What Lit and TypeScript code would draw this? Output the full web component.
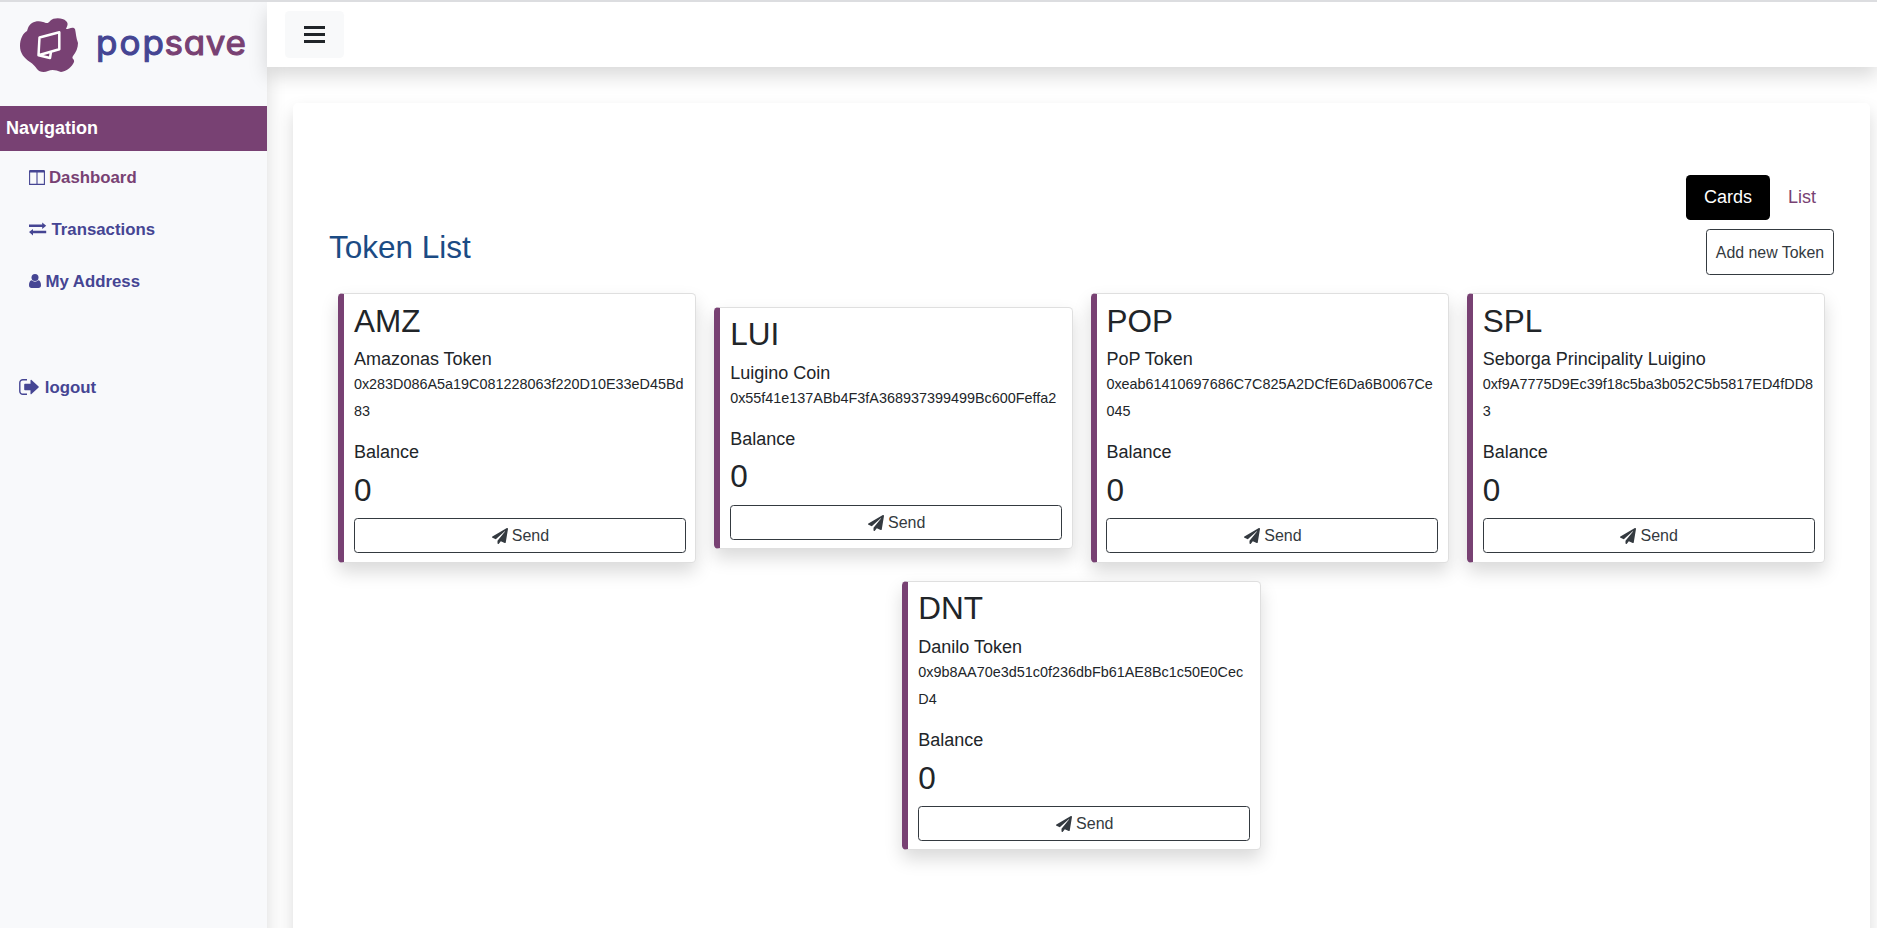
import { LitElement, html, css, svg } from "lit";
import { customElement, property } from "lit/decorators.js";

interface Token {
  symbol: string;
  name: string;
  address: string;
  balance: string;
}

const TOKENS: Token[] = [
  { symbol: "AMZ", name: "Amazonas Token", address: "0x283D086A5a19C081228063f220D10E33eD45Bd83", balance: "0" },
  { symbol: "LUI", name: "Luigino Coin", address: "0x55f41e137ABb4F3fA368937399499Bc600Feffa2", balance: "0" },
  { symbol: "POP", name: "PoP Token", address: "0xeab61410697686C7C825A2DCfE6Da6B0067Ce045", balance: "0" },
  { symbol: "SPL", name: "Seborga Principality Luigino", address: "0xf9A7775D9Ec39f18c5ba3b052C5b5817ED4fDD83", balance: "0" },
  { symbol: "DNT", name: "Danilo Token", address: "0x9b8AA70e3d51c0f236dbFb61AE8Bc1c50E0CecD4", balance: "0" },
];

@customElement("token-card")
export class TokenCard extends LitElement {
  @property({ attribute: false }) token!: Token;

  static styles = css`
    :host {
      display: block;
      box-sizing: border-box;
      width: 358.25px;
      background: #fff;
      border: 1px solid #dfdfdf;
      border-left: 6px solid #784173;
      border-radius: 4.5px;
      box-shadow: 0 9px 18px rgba(0, 0, 0, 0.15);
      padding: 7.6px 9.3px 8.6px 9.9px;
      color: #212529;
      font-size: 18px;
      line-height: 27px;
    }
    .symbol, .balance { font-size: 31.5px; line-height: 38.4px; }
    .name { margin-top: 6.3px; }
    .address { font-size: 14.4px; word-break: break-all; margin-top: -2px; }
    .label { margin-top: 14px; }
    .balance { margin-top: 4.5px; }
    .send {
      display: flex;
      align-items: center;
      justify-content: center;
      gap: 4px;
      box-sizing: border-box;
      width: 100%;
      height: 34.8px;
      margin-top: 9px;
      padding: 1px 0 0 1px;
      border: 1px solid #343a40;
      border-radius: 3.6px;
      background: transparent;
      color: #343a40;
      font: 16px/24px "Liberation Sans", Arial, sans-serif;
    }
    .plane { width: 16px; height: 16px; fill: currentColor; }
  `;

  render() {
    const t = this.token;
    return html`
      <div class="symbol">${t.symbol}</div>
      <div class="name">${t.name}</div>
      <div class="address">${t.address}</div>
      <div class="label">Balance</div>
      <div class="balance">${t.balance}</div>
      <button class="send">
        <svg class="plane" viewBox="0 0 512 512"><path d="M476 3.2L12.5 270.6c-18.1 10.4-15.8 35.6 2.2 43.2L121 358.4l287.3-253.2c5.500-4.900 13.300 2.600 8.600 8.300L176 407v80.500c0 23.600 28.500 32.900 42.500 15.800L282 426l124.600 52.200c14.200 6 30.400-2.900 33-18.200l72-432C515 7.800 493.300-6.800 476 3.200z"/></svg>
        <span>Send</span>
      </button>
    `;
  }
}

const columnsIcon = svg`<path d="M.6 1.500h14.800v12.900H.6z M8 2v12" fill="none" stroke="currentColor" stroke-width="1.100"/><path d="M0 1.200Q0 0 1.200 0h13.600Q16 0 16 1.200V2.500H0z" fill="currentColor"/>`;
const exchangeIcon = svg`<path d="M0 2.500h13.200V.6L17.200 3.800 13.200 7V5H0zM17.200 8.700v2.500H4V13.400L0 10.100 4 6.900V8.700z" fill="currentColor"/>`;
const userIcon = svg`<circle cx="6" cy="3.600" r="3.500" fill="currentColor"/><path d="M2.600 6.300C.8 6.600 0 8.700 0 11.300 0 13 1 14 2.500 14h7c1.500 0 2.500-1 2.500-2.700 0-2.600-.8-4.700-2.600-5-1.900 1.900-4.900 1.900-6.800 0z" fill="currentColor"/>`;
const logoutIcon = svg`<path d="M8 .8H4A3 3 0 0 0 .8 3.800v8.400A3 3 0 0 0 4 15.200h4" fill="none" stroke="currentColor" stroke-width="1.400"/><path d="M6 4.700h5.500V1.300c0-.5.6-.8 1-.4l7.100 6.500c.3.300.3.900 0 1.200l-7.100 6.500c-.4.400-1 .1-1-.4v-3.400H6c-.5 0-.8-.3-.8-.8v-5c0-.5.3-.8.8-.8z" fill="currentColor"/>`;

@customElement("app-root")
export class AppRoot extends LitElement {
  static styles = css`
    :host {
      display: grid;
      grid-template-columns: 267px 1fr;
      box-sizing: border-box;
      height: 928px;
      overflow: hidden;
      border-top: 2px solid #dcdde0;
      background: #fff;
      font-family: "Liberation Sans", Arial, sans-serif;
      font-size: 18px;
      line-height: 27px;
      color: #212529;
    }
    .sidebar {
      background: #f8f9fb;
      box-shadow: 0 9px 18px rgba(0, 0, 0, 0.15);
      color: #454593;
      font-weight: bold;
    }
    .brand { display: block; width: 267px; height: 104px; }
    .wordmark {
      font-family: Inter, "Open Sans", sans-serif;
      font-size: 35px;
      font-weight: 400;
      font-feature-settings: "cv11";
      stroke-width: 1.1px;
      stroke-linejoin: round;
    }
    .heading {
      height: 45px;
      box-sizing: border-box;
      padding: 9px 6px;
      background: #784173;
      color: #fff;
    }
    .items { display: flex; flex-direction: column; font-size: 16.8px; padding-left: 29px; }
    .item { display: flex; align-items: center; height: 52px; gap: 4.5px; }
    .item.active { color: #784173; gap: 4px; }
    .item.active svg { color: #454593; }
    .logout { display: flex; align-items: center; gap: 5.5px; height: 52px; margin-top: 54px; padding-left: 19.3px; font-size: 16.8px; }
    .page { display: flex; flex-direction: column; min-width: 0; }
    .topbar {
      flex: none;
      height: 65px;
      box-sizing: border-box;
      padding: 9px 18px;
      background: #fff;
      box-shadow: 0 9px 18px rgba(0, 0, 0, 0.15);
    }
    .menu {
      display: flex;
      align-items: center;
      justify-content: center;
      width: 59px;
      height: 47px;
      padding: 0;
      border: 0;
      border-radius: 4.5px;
      background: #f8f9fa;
      color: #212529;
    }
    .panel {
      flex: 1 0 900px;
      box-sizing: border-box;
      margin: 36px 7px 0 26px;
      padding: 72px 36px 0;
      background: #fff;
      border-radius: 5px;
      box-shadow: 0 9px 18px rgba(0, 0, 0, 0.15);
    }
    .tabs { display: flex; justify-content: flex-end; }
    .tab { padding: 9px 18px; border-radius: 4.5px; color: #784173; }
    .tab.active { background: #000; color: #fff; }
    .title-row { display: flex; justify-content: space-between; align-items: flex-start; padding-top: 9px; height: 55.2px; }
    .title { margin: -1px 0 0; font-size: 31.5px; line-height: 38.4px; font-weight: 400; color: #1b4b84; }
    .add {
      box-sizing: border-box;
      width: 128px;
      height: 46px;
      padding: 1px 0 0;
      border: 1px solid #343a40;
      border-radius: 3.6px;
      background: transparent;
      color: #343a40;
      font: 15.9px/24px "Liberation Sans", Arial, sans-serif;
    }
    .cards { display: flex; flex-wrap: wrap; align-items: center; justify-content: center; }
    token-card { margin: 9px; }
  `;

  render() {
    return html`
      <nav class="sidebar">
        <svg class="brand" viewBox="0 2 267 104">
          <path fill="#784173" d="M28 28C30 23 36 20 43 22C46 23 48 24 50 21C54 17 63 18 66 21C69 24 67 26 66 29C69 29 73 26 75 29C76 33 76 38 78 43C78 48 76 52 73 56C71 59 75 59 74 62C72 67 67 71 61 72C56 70 52 69 48 71C44 73 39 72 37 69C35 66 33 64 30 62C24 58 20 53 20 46C20 39 23 33 27 31Z"/>
          <path fill="none" stroke="#fff" stroke-width="2.500" stroke-linejoin="round" d="M39.500 37.500L59.300 32.200V49.300L38.500 55.200ZM38.500 55.200L50 58L51 51.800"/>
          <g class="wordmark">
            <text x="96" y="55" fill="#454593" stroke="#454593" textLength="68">pop</text>
            <text x="164.500" y="55" fill="#784173" stroke="#784173" textLength="81.500">save</text>
          </g>
        </svg>
        <div class="heading">Navigation</div>
        <div class="items">
          <div class="item active"><svg width="16" height="15" viewBox="0 0 16 15">${columnsIcon}</svg>Dashboard</div>
          <div class="item"><svg width="18" height="14" viewBox="0 0 18 14">${exchangeIcon}</svg>Transactions</div>
          <div class="item"><svg width="12" height="14" viewBox="0 0 12 14">${userIcon}</svg>My Address</div>
        </div>
        <div class="logout"><svg width="20" height="16" viewBox="0 0 20 16">${logoutIcon}</svg>logout</div>
      </nav>
      <div class="page">
        <header class="topbar">
          <button class="menu" aria-label="Menu">
            <svg width="21" height="17" viewBox="0 0 21 17"><path d="M0 0h21v3H0zM0 7h21v3H0zM0 14h21v3H0z" fill="currentColor"/></svg>
          </button>
        </header>
        <main class="panel">
          <div class="tabs">
            <span class="tab active">Cards</span>
            <span class="tab">List</span>
          </div>
          <div class="title-row">
            <h2 class="title">Token List</h2>
            <button class="add">Add new Token</button>
          </div>
          <div class="cards">${TOKENS.map((t) => html`<token-card .token=${t}></token-card>`)}</div>
        </main>
      </div>
    `;
  }
}
